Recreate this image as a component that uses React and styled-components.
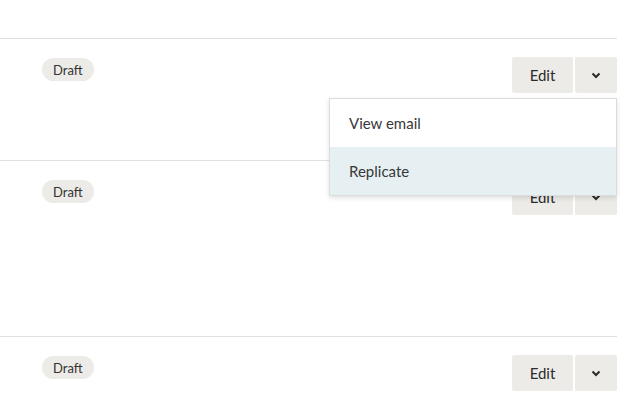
import React from 'react';
import styled, { createGlobalStyle } from 'styled-components';

const GlobalStyle = createGlobalStyle`
  body {
    margin: 0;
    background: #fff;
    font-family: Lato, "Noto Sans", sans-serif;
    color: #2b2b2b;
  }
`;

const rows = [
  { id: 1, status: 'Draft', height: 122, open: true },
  { id: 2, status: 'Draft', height: 176, open: false },
  { id: 3, status: 'Draft', height: 82, open: false },
];

const ChevronDown = () => (
  <svg width="10" height="7" viewBox="0 0 10 7" fill="none">
    <path d="M1.5 1.5L5 5L8.5 1.5" stroke="#2b2b2b" strokeWidth="2" />
  </svg>
);

const App = () => {
  return (
    <>
      <GlobalStyle />
      <Page>
        <TopSpace />
        {rows.map((row) => (
          <Row key={row.id} $height={row.height}>
            <Badge>{row.status}</Badge>
            <Actions>
              <EditButton>Edit</EditButton>
              <MenuButton aria-label="More actions">
                <ChevronDown />
              </MenuButton>
              {row.open && (
                <Menu>
                  <MenuItem>View email</MenuItem>
                  <MenuItem $active>Replicate</MenuItem>
                </Menu>
              )}
            </Actions>
          </Row>
        ))}
      </Page>
    </>
  );
};

export default App;

const Page = styled.div`
  width: 617px;
`;

const TopSpace = styled.div`
  height: 38px;
`;

const Row = styled.div`
  display: flex;
  justify-content: space-between;
  align-items: flex-start;
  box-sizing: border-box;
  height: ${(p) => p.$height}px;
  padding: 18px 0 0 42px;
  border-top: 1px solid #e2e0dd;
`;

const Badge = styled.span`
  display: inline-flex;
  align-items: center;
  height: 23px;
  margin-top: 1px;
  padding: 0 11px;
  border-radius: 12px;
  background: #edebe7;
  font-size: 13px;
  color: #333;
`;

const Actions = styled.div`
  position: relative;
  display: flex;
  gap: 2px;
`;

const EditButton = styled.button`
  width: 61px;
  height: 36px;
  border: none;
  border-radius: 2px;
  background: #edebe7;
  font-family: inherit;
  font-size: 15px;
  color: #2b2b2b;
  padding: 0;
`;

const MenuButton = styled(EditButton)`
  width: 42px;
  display: flex;
  align-items: center;
  justify-content: center;
`;

const Menu = styled.div`
  position: absolute;
  top: calc(100% + 5px);
  right: 0;
  z-index: 10;
  box-sizing: border-box;
  width: 288px;
  background: #fff;
  border: 1px solid #dcdcdc;
  box-shadow: 0 2px 5px rgba(0, 0, 0, 0.12);
`;

const MenuItem = styled.div`
  height: 48px;
  display: flex;
  align-items: center;
  padding: 0 19px;
  font-size: 15px;
  color: #383838;
  background: ${(p) => (p.$active ? '#e6f0f2' : '#fff')};
`;
